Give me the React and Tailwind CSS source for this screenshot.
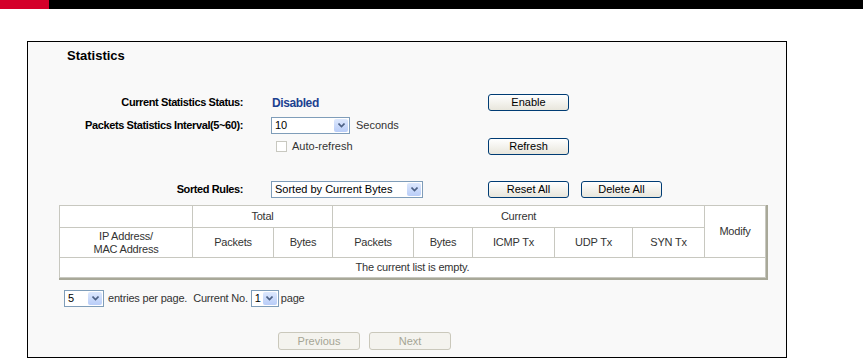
import React from "react";

const font = { fontFamily: '"Liberation Sans", Arial, sans-serif' };

const Chevron = () => (
  <svg width="7" height="5" viewBox="0 0 7 5">
    <path d="M0.5 0.5 L3.5 3.5 L6.5 0.5" fill="none" stroke="#4d6185" strokeWidth="1.6" />
  </svg>
);

const Select = ({ className, value }) => (
  <div className={`flex h-[17px] border border-[#7f9db9] bg-white ${className}`}>
    <div className="flex-1 pl-[3px] text-[11px] leading-[15px] text-black">{value}</div>
    <div className="m-px flex w-[14px] items-center justify-center rounded-[2px] bg-gradient-to-b from-[#dde8fd] to-[#b9cdf8]">
      <Chevron />
    </div>
  </div>
);

const Button = ({ children, className }) => (
  <div
    className={`flex h-[17px] w-[81px] items-center justify-center rounded-[3px] border border-[#003c74] bg-gradient-to-b from-white to-[#e8e6dc] text-[11px] text-black ${className}`}
  >
    {children}
  </div>
);

const Label = ({ children }) => (
  <div className="w-[215px] text-right text-[11px] font-bold tracking-[-0.4px] text-black">{children}</div>
);

export default function App() {
  const th = "border border-[#c8c8c0] text-center font-normal text-[11px] tracking-[-0.2px] text-[#333]";
  return (
    <div className="h-[358px] w-[863px] overflow-hidden bg-white" style={font}>
      <div className="flex h-[9px]">
        <div className="w-[49px] bg-[#d4002a]" />
        <div className="flex-1 bg-black" />
      </div>

      <div className="ml-[27px] mt-[32px] flex h-[317px] w-[760px] flex-col border border-black bg-[#f9f9f9]">
        <div className="ml-[39px] mt-[6px] h-[16px] text-[13px] font-bold leading-[16px] text-black">
          Statistics
        </div>

        <div className="mt-[30px] flex h-[17px] items-center">
          <Label>Current Statistics Status:</Label>
          <div className="ml-[29px] w-[216px] text-[12px] font-bold tracking-[-0.4px] text-[#1c4190]">Disabled</div>
          <Button>Enable</Button>
        </div>

        <div className="mt-[6px] flex h-[17px] items-center">
          <Label>Packets Statistics Interval(5~60):</Label>
          <div className="ml-[28px] flex items-center">
            <Select className="w-[79px]" value="10" />
            <span className="ml-[6px] text-[11px] text-[#333]">Seconds</span>
          </div>
        </div>

        <div className="mt-[4px] flex h-[17px] items-center">
          <div className="ml-[248px] flex w-[212px] items-center">
            <div className="h-[11px] w-[11px] border border-[#c8c8c0] bg-white" />
            <span className="ml-[5px] text-[11px] text-[#333]">Auto-refresh</span>
          </div>
          <Button>Refresh</Button>
        </div>

        <div className="mt-[26px] flex h-[17px] items-center">
          <Label>Sorted Rules:</Label>
          <div className="ml-[28px] w-[217px]">
            <Select className="w-[152px]" value="Sorted by Current Bytes" />
          </div>
          <Button>Reset All</Button>
          <Button className="ml-[12px]">Delete All</Button>
        </div>

        <div className="ml-[31px] mt-[7px] w-[709px] border-b-2 border-r-2 border-[#a8a898]">
          <table className="w-full table-fixed border-collapse bg-white">
            <colgroup>
              <col className="w-[133px]" />
              <col className="w-[81px]" />
              <col className="w-[59px]" />
              <col className="w-[81px]" />
              <col className="w-[59px]" />
              <col className="w-[82px]" />
              <col className="w-[78px]" />
              <col className="w-[72px]" />
              <col />
            </colgroup>
            <tbody>
              <tr className="h-[22px]">
                <td className={th}></td>
                <td className={th} colSpan={2}>Total</td>
                <td className={th} colSpan={5}>Current</td>
                <td className={th} rowSpan={2}>Modify</td>
              </tr>
              <tr className="h-[30px]">
                <td className={`${th} leading-[13px]`}>
                  IP Address/
                  <br />
                  MAC Address
                </td>
                <td className={th}>Packets</td>
                <td className={th}>Bytes</td>
                <td className={th}>Packets</td>
                <td className={th}>Bytes</td>
                <td className={th}>ICMP Tx</td>
                <td className={th}>UDP Tx</td>
                <td className={th}>SYN Tx</td>
              </tr>
              <tr className="h-[20px]">
                <td className={th} colSpan={9}>The current list is empty.</td>
              </tr>
            </tbody>
          </table>
        </div>

        <div className="ml-[36px] mt-[10px] flex h-[16px] items-center text-[11px] tracking-[-0.2px] text-[#333]">
          <Select className="h-[16px] w-[40px]" value="5" />
          <span className="ml-[4px]">entries per page.</span>
          <span className="ml-[6px]">Current No.</span>
          <Select className="ml-[3px] h-[16px] w-[28px]" value="1" />
          <span className="ml-[2px]">page</span>
        </div>

        <div className="ml-[250px] mt-[26px] flex gap-[9px]">
          <div className="flex h-[18px] w-[82px] items-center justify-center rounded-[3px] border border-[#cac8bb] bg-[#f4f3ee] text-[11px] text-[#a5a595]">
            Previous
          </div>
          <div className="flex h-[18px] w-[82px] items-center justify-center rounded-[3px] border border-[#cac8bb] bg-[#f4f3ee] text-[11px] text-[#a5a595]">
            Next
          </div>
        </div>
      </div>
    </div>
  );
}
